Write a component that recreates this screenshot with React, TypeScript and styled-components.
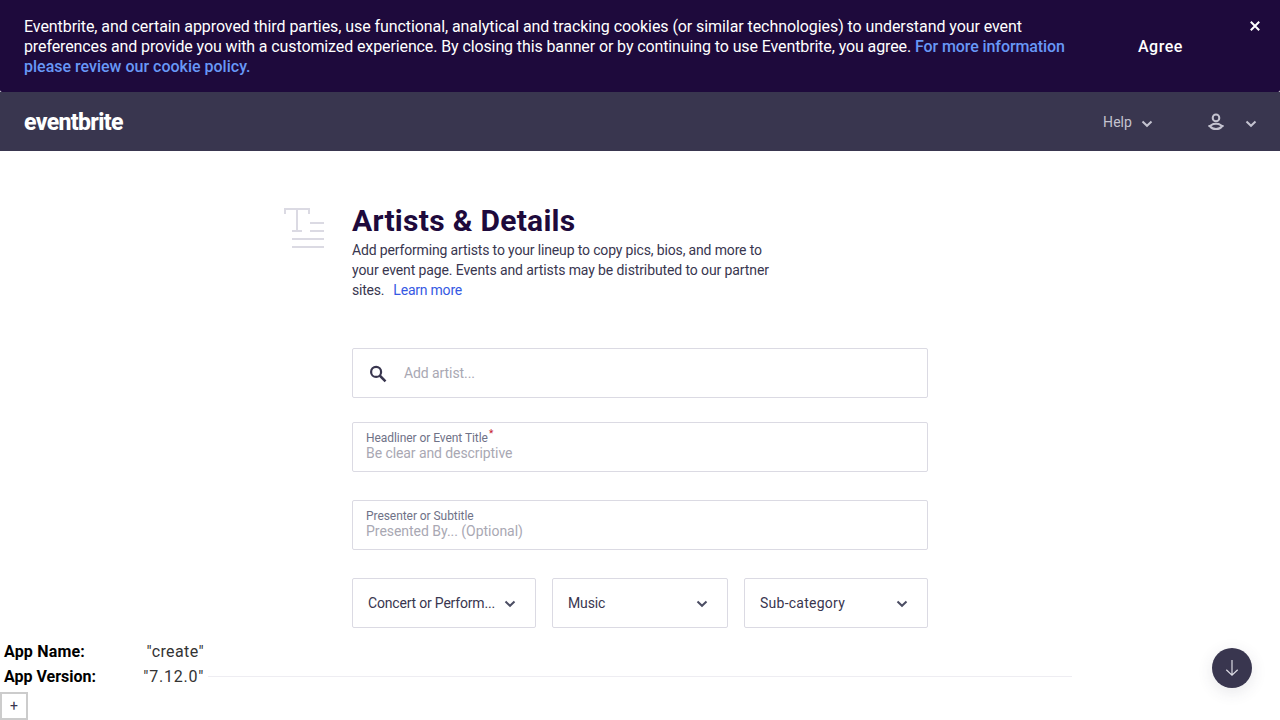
import React from "react";
import styled, { createGlobalStyle } from "styled-components";

const GlobalStyle = createGlobalStyle`
  *, *::before, *::after { box-sizing: border-box; }
  html, body { margin: 0; padding: 0; background: #fff; }
  body {
    height: 720px;
    overflow: hidden;
    font-family: Roboto, "Liberation Sans", sans-serif;
    font-size: 14px;
    line-height: 20px;
    color: #39364f;
  }
  button, input { font: inherit; color: inherit; }
`;

/* Cookie banner */

const Banner = styled.aside`
  display: flex;
  align-items: center;
  height: 92px;
  padding: 0 20px 0 24px;
  background: #1e0a3c;
  color: #fff;
  font-size: 16px;
  border-radius: 0 0 2px 2px;
`;

const BannerCopy = styled.p`
  margin: 1px 0 0;
  width: 1060px;
  white-space: nowrap;
`;

const Tracked = styled.span<{ $ls: number }>`
  letter-spacing: ${(p) => p.$ls}px;
`;

const PolicyLink = styled.a<{ $ls: number }>`
  color: #6898f7;
  font-weight: 500;
  letter-spacing: ${(p) => p.$ls}px;
`;

const AgreeButton = styled.button`
  margin: 1px 0 0 54px;
  padding: 0;
  border: 0;
  background: none;
  color: #fff;
  font-weight: 500;
  letter-spacing: 0.5px;
`;

const CloseButton = styled.button`
  display: flex;
  align-self: flex-start;
  margin: 21px 0 0 auto;
  padding: 0;
  border: 0;
  background: none;
`;

/* Navigation */

const NavBar = styled.header`
  display: flex;
  align-items: center;
  height: 59px;
  padding: 0 23px 0 24px;
  background: #39364f;
  color: #c4c3d0;
`;

const Brand = styled.a`
  margin-top: 3px;
  font-size: 23px;
  font-weight: 800;
  line-height: 30px;
  letter-spacing: -0.64px;
  color: #fff;
`;

const HelpMenu = styled.button`
  display: flex;
  align-items: center;
  gap: 9px;
  margin-left: auto;
  padding: 0;
  border: 0;
  background: none;
  letter-spacing: 0.05px;
  svg { margin-top: 4px; }
`;

const UserMenu = styled.button`
  display: flex;
  align-items: center;
  gap: 21px;
  margin-left: 55px;
  padding: 0;
  border: 0;
  background: none;
  svg:last-child { margin-top: 4px; }
`;

/* Form section */

const Section = styled.main`
  display: flex;
  gap: 28px;
  width: 644px;
  margin: 0 0 0 284px;
  padding-top: 57px;
`;

const SectionBody = styled.div`
  width: 576px;
`;

const Title = styled.h1`
  margin: -7px 0 0;
  font-size: 30px;
  line-height: 40px;
  font-weight: 700;
  letter-spacing: 0.28px;
  color: #1e0a3c;
`;

const Intro = styled.p`
  margin: -1px 0 48px;
  white-space: nowrap;
`;

const LearnMore = styled.a`
  margin-left: 9px;
  letter-spacing: -0.22px;
  color: #3659e3;
`;

const fieldBox = `
  height: 50px;
  border: 1px solid #dbdae3;
  border-radius: 2px;
  background: #fff;
`;

const SearchField = styled.label`
  ${fieldBox}
  display: flex;
  align-items: center;
  gap: 17px;
  padding-left: 16px;
  margin-bottom: 24px;
  svg { margin-top: 2px; }
`;

const Placeholder = styled.span<{ $ls: number }>`
  color: #a9a8b3;
  letter-spacing: ${(p) => p.$ls}px;
`;

const TextField = styled.label`
  ${fieldBox}
  display: flex;
  flex-direction: column;
  padding: 7px 13px 0;
  margin-bottom: 28px;
`;

const FieldLabel = styled.span`
  display: flex;
  gap: 2px;
  height: 13px;
  font-size: 12px;
  line-height: 16px;
  letter-spacing: -0.06px;
  color: #6f7287;
`;

const Required = styled.span`
  margin: -4px 0 0 -1px;
  font-size: 10px;
  color: #c5162e;
`;

const SelectRow = styled.div`
  display: grid;
  grid-template-columns: 184px 176px 184px;
  gap: 16px;
`;

const Select = styled.button<{ $ls: number }>`
  ${fieldBox}
  display: flex;
  align-items: center;
  justify-content: space-between;
  padding: 0 19px 0 15px;
  letter-spacing: ${(p) => p.$ls}px;
  white-space: nowrap;
  svg { margin-top: 2px; }
`;

const Divider = styled.hr`
  width: 864px;
  height: 1px;
  margin: 48px auto 0;
  border: 0;
  background: #eeedf2;
`;

/* Floating elements */

const DebugPanel = styled.div`
  position: fixed;
  left: 0;
  bottom: 0;
  width: 208px;
  background: #fff;
`;

const DebugRow = styled.div`
  display: flex;
  justify-content: space-between;
  height: 25px;
  padding: 0 4px;
  font-size: 16px;
  line-height: 24px;
  color: #333;
`;

const DebugKey = styled.b<{ $ls: number }>`
  color: #000;
  letter-spacing: ${(p) => p.$ls}px;
`;

const DebugToggle = styled.button`
  display: flex;
  align-items: center;
  justify-content: center;
  width: 28px;
  height: 28px;
  margin-top: 2px;
  padding: 0;
  border: 2px solid #ccc;
  background: #fff;
`;

const ScrollButton = styled.button`
  position: fixed;
  right: 28px;
  bottom: 32px;
  display: flex;
  align-items: center;
  justify-content: center;
  width: 40px;
  height: 40px;
  padding: 0;
  border: 0;
  border-radius: 50%;
  background: #39364f;
  box-shadow: 0 4px 16px rgba(57, 54, 79, 0.12);
`;

const Chevron = ({ color = "#4b4d63" }: { color?: string }) => (
  <svg width="12" height="8" viewBox="0 0 12 8" fill="none">
    <path d="M1.5 1.5 6 5.8l4.500-4.300" stroke={color} strokeWidth="2" />
  </svg>
);

const UserIcon = () => (
  <svg width="16" height="18" viewBox="0 0 16 18" fill="none" stroke="#c4c3d0" strokeWidth="2">
    <circle cx="8" cy="4.900" r="3.300" />
    <path d="M.4 13.100c1.300 0 2.100-.3 3.100-1.100C4.600 11.100 6 10.800 8 10.800s3.400.3 4.500 1.200c1 .8 1.800 1.100 3.100 1.100M2.100 13.500c1.300 1.600 3.300 2.500 5.900 2.500s4.600-.9 5.900-2.500" />
  </svg>
);

const DetailsIcon = () => (
  <svg width="40" height="40" viewBox="0 0 40 40" fill="none" stroke="#dbdae3" strokeWidth="2">
    <path d="M1 6V1h24v5M13 1v22M8 23h10M26 15h14M26 23h14M8 31h32M8 39h32" />
  </svg>
);

const SearchIcon = () => (
  <svg width="18" height="18" viewBox="0 0 18 18" fill="none" stroke="#39364f">
    <circle cx="7.100" cy="6.900" r="5" strokeWidth="2.200" />
    <path d="m10.700 10.500 5.800 5.800" strokeWidth="2.500" />
  </svg>
);

export default function App() {
  return (
    <>
      <GlobalStyle />
      <Banner>
        <BannerCopy>
          <Tracked $ls={-0.075}>
            Eventbrite, and certain approved third parties, use functional, analytical and tracking cookies (or similar
            technologies) to understand your event
          </Tracked>
          <br />
          <Tracked $ls={-0.11}>
            preferences and provide you with a customized experience. By closing this banner or by continuing to use
            Eventbrite, you agree.{" "}
          </Tracked>
          <PolicyLink $ls={-0.09}>For more information</PolicyLink>
          <br />
          <PolicyLink $ls={0}>please review our cookie policy.</PolicyLink>
        </BannerCopy>
        <AgreeButton>Agree</AgreeButton>
        <CloseButton aria-label="Close">
          <svg width="10" height="10" viewBox="0 0 10 10">
            <path d="m.8.8 8.400 8.400M9.200.8.8 9.200" stroke="#fff" strokeWidth="2" />
          </svg>
        </CloseButton>
      </Banner>

      <NavBar>
        <Brand>eventbrite</Brand>
        <HelpMenu>
          Help
          <Chevron color="#c4c3d0" />
        </HelpMenu>
        <UserMenu aria-label="Account">
          <UserIcon />
          <Chevron color="#c4c3d0" />
        </UserMenu>
      </NavBar>

      <Section>
        <DetailsIcon />
        <SectionBody>
          <Title>Artists &amp; Details</Title>
          <Intro>
            <Tracked $ls={-0.15}>Add performing artists to your lineup to copy pics, bios, and more to</Tracked>
            <br />
            <Tracked $ls={-0.105}>your event page. Events and artists may be distributed to our partner</Tracked>
            <br />
            <Tracked $ls={-0.2}>sites.</Tracked>
            <LearnMore>Learn more</LearnMore>
          </Intro>

          <SearchField>
            <SearchIcon />
            <Placeholder $ls={-0.08}>Add artist...</Placeholder>
          </SearchField>
          <TextField>
            <FieldLabel>
              Headliner or Event Title<Required>*</Required>
            </FieldLabel>
            <Placeholder $ls={-0.08}>Be clear and descriptive</Placeholder>
          </TextField>
          <TextField>
            <FieldLabel>Presenter or Subtitle</FieldLabel>
            <Placeholder $ls={-0.03}>Presented By... (Optional)</Placeholder>
          </TextField>
          <SelectRow>
            <Select $ls={-0.19}>
              Concert or Perform...
              <Chevron />
            </Select>
            <Select $ls={-0.15}>
              Music
              <Chevron />
            </Select>
            <Select $ls={0.25}>
              Sub-category
              <Chevron />
            </Select>
          </SelectRow>
        </SectionBody>
      </Section>
      <Divider />

      <DebugPanel>
        <DebugRow>
          <DebugKey $ls={0.18}>App Name:</DebugKey>
          <Tracked $ls={0.4}>"create"</Tracked>
        </DebugRow>
        <DebugRow>
          <DebugKey $ls={0}>App Version:</DebugKey>
          <Tracked $ls={0.75}>"7.12.0"</Tracked>
        </DebugRow>
        <DebugToggle>+</DebugToggle>
      </DebugPanel>

      <ScrollButton aria-label="Scroll down">
        <svg width="14" height="18" viewBox="0 0 14 18" fill="none" stroke="#dbdae3" strokeWidth="1.200">
          <path d="M7 1v15M1.300 10.700 7 16.200l5.700-5.500" />
        </svg>
      </ScrollButton>
    </>
  );
}
